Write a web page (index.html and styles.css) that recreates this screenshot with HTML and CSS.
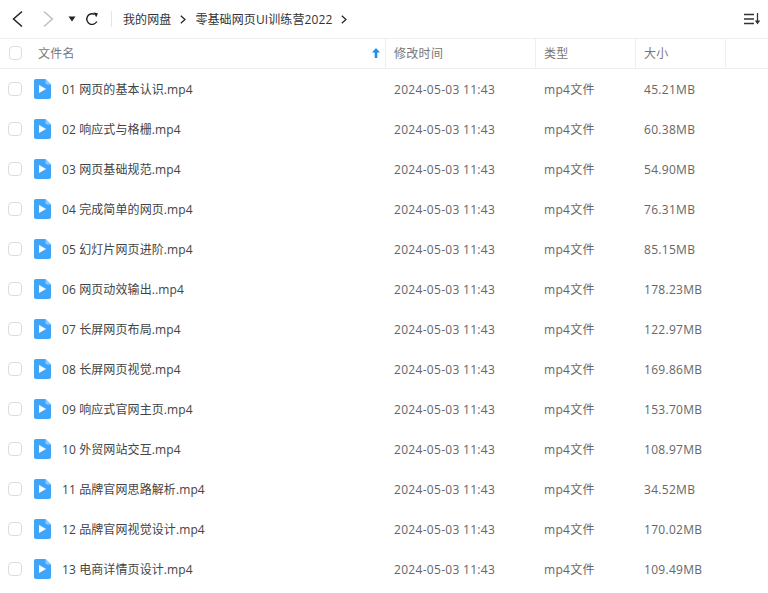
FILE: index.html
```html
<!DOCTYPE html>
<html lang="zh-CN">
<head>
    <meta charset="UTF-8">
    <title>零基础网页UI训练营2022</title>
    <link rel="stylesheet" href="styles.css">
</head>
<body>
    <!-- Toolbar -->
    <div class="toolbar">
        <svg class="nav-icon back" width="14" height="18" viewBox="0 0 14 18"><path d="M12 1.500 3.500 9l8.500 7.500" fill="none" stroke="#222" stroke-width="1.500"/></svg>
        <svg class="nav-icon forward" width="14" height="18" viewBox="0 0 14 18"><path d="M3 1.500 11.500 9 3 16.500" fill="none" stroke="#bbb" stroke-width="1.300"/></svg>
        <svg class="nav-icon caret" width="8" height="6" viewBox="0 0 8 6"><path d="M0.500 0.500h7L4 5.500z" fill="#222"/></svg>
        <svg class="nav-icon refresh" width="14" height="14" viewBox="0 0 14 14"><path d="M11.800 9.500A5.300 5.300 0 1 1 9.600 2.400" fill="none" stroke="#222" stroke-width="1.400"/><path d="M8.500 0.300l4.500 1.200-1.800 3.800z" fill="#222"/></svg>
        <div class="divider"></div>
        <div class="crumbs">
            <span>我的网盘</span>
            <svg class="crumb-arrow" width="6" height="9" viewBox="0 0 6 9"><path d="M0.800 0.800 5 4.500 0.800 8.200" fill="none" stroke="#222" stroke-width="1.200"/></svg>
            <span>零基础网页UI训练营2022</span>
            <svg class="crumb-arrow" width="6" height="9" viewBox="0 0 6 9"><path d="M0.800 0.800 5 4.500 0.800 8.200" fill="none" stroke="#222" stroke-width="1.200"/></svg>
        </div>
        <svg class="sort-icon" width="17" height="12" viewBox="0 0 17 12"><path d="M0 1.500h10M0 6h10M0 10.500h10" stroke="#333" stroke-width="1.300"/><path d="M13.500 0v9" stroke="#333" stroke-width="1.300"/><path d="M10.800 7.500h5.400L13.500 11.500z" fill="#333"/></svg>
    </div>

    <!-- Table header -->
    <div class="table-head">
        <div class="cell name-cell">
            <span class="checkbox head-check"></span>
            <span class="head-name">文件名</span>
            <svg class="sort-arrow" width="8" height="10" viewBox="0 0 8 10"><path d="M4 0 8 4.500H5.300V10H2.700V4.500H0z" fill="#1e90e8"/></svg>
        </div>
        <div class="cell">修改时间</div>
        <div class="cell">类型</div>
        <div class="cell">大小</div>
        <div class="cell"></div>
    </div>

    <!-- Files -->
    <div class="file-list" id="file-list"></div>

    <script src="files.js"></script>
</body>
</html>
```

FILE: files.js
```js
// name and size of each video in the folder
const files = [
    ['01 网页的基本认识.mp4', '45.21MB'],
    ['02 响应式与格栅.mp4', '60.38MB'],
    ['03 网页基础规范.mp4', '54.90MB'],
    ['04 完成简单的网页.mp4', '76.31MB'],
    ['05 幻灯片网页进阶.mp4', '85.15MB'],
    ['06 网页动效输出..mp4', '178.23MB'],
    ['07 长屏网页布局.mp4', '122.97MB'],
    ['08 长屏网页视觉.mp4', '169.86MB'],
    ['09 响应式官网主页.mp4', '153.70MB'],
    ['10 外贸网站交互.mp4', '108.97MB'],
    ['11 品牌官网思路解析.mp4', '34.52MB'],
    ['12 品牌官网视觉设计.mp4', '170.02MB'],
    ['13 电商详情页设计.mp4', '109.49MB']
];

const icon = '<svg class="file-icon" width="17" height="20" viewBox="0 0 17 20">' +
    '<path d="M2 0h9.500L17 5.500V18a2 2 0 0 1-2 2H2a2 2 0 0 1-2-2V2a2 2 0 0 1 2-2z" fill="#3fa5fb"/>' +
    '<path d="M11.500 0 17 5.500h-3.500a2 2 0 0 1-2-2z" fill="#8ccbfd"/>' +
    '<path d="M5 6 12 10l-7 4z" fill="#fff"/></svg>';

const list = document.getElementById('file-list');
files.forEach(file => {
    const row = document.createElement('div');
    row.className = 'file-row';
    row.innerHTML = '<div class="name-cell row-name"><span class="checkbox"></span>' + icon +
        '<span class="file-name">' + file[0] + '</span></div>' +
        '<div class="file-cell">2024-05-03 11:43</div>' +
        '<div class="file-cell">mp4文件</div>' +
        '<div class="file-cell">' + file[1] + '</div>';
    list.appendChild(row);
});
```

FILE: styles.css
```css
body {
    margin: 0;
    height: 593px;
    overflow: hidden;
    background-color: #fff;
    color: #444;
    font-family: "Open Sans", "Noto Sans CJK SC", sans-serif;
    font-size: 12px;
    letter-spacing: 0.3px;
}
.toolbar {
    display: flex;
    align-items: center;
    height: 38px;
    border-bottom: 1px solid #eee;
}
.nav-icon {
    flex: none;
}
.back {
    margin-left: 10px;
}
.forward {
    margin-left: 17px;
}
.caret {
    margin-left: 13px;
}
.refresh {
    margin-left: 9px;
}
.divider {
    width: 1px;
    height: 16px;
    margin-left: 12px;
    background-color: #e4e4e4;
}
.crumbs {
    display: flex;
    align-items: center;
    margin-left: 11px;
    color: #333;
    letter-spacing: 0.1px;
}
.crumb-arrow {
    margin: 0 9px;
}
.sort-icon {
    margin-left: auto;
    margin-right: 7px;
}
.table-head,
.file-row {
    display: grid;
    grid-template-columns: 386px 150px 100px 90px 1fr;
}
.table-head {
    height: 29px;
    border-bottom: 1px solid #eee;
    color: #777;
}
.cell {
    display: flex;
    align-items: center;
    padding-left: 8px;
    padding-bottom: 2px;
    border-right: 1px solid #eee;
}
.cell:last-child {
    border-right: none;
}
.cell.name-cell {
    padding-left: 0;
}
.name-cell {
    display: flex;
    align-items: center;
}
.checkbox {
    flex: none;
    box-sizing: border-box;
    width: 14px;
    height: 14px;
    margin-left: 8px;
    border: 1px solid #ddd;
    border-radius: 4px;
    background-color: #fff;
}
.head-check {
    width: 13px;
    margin-left: 9px;
}
.head-name {
    margin-left: 16px;
}
.sort-arrow {
    margin-left: auto;
    margin-right: 5px;
}
.file-row {
    height: 40px;
    align-items: center;
}
.file-icon {
    flex: none;
    margin-left: 12px;
}
.file-name {
    margin-left: 11px;
    color: #444;
    letter-spacing: 0.1px;
}
.file-cell {
    padding-left: 8px;
    color: #666;
}
```
